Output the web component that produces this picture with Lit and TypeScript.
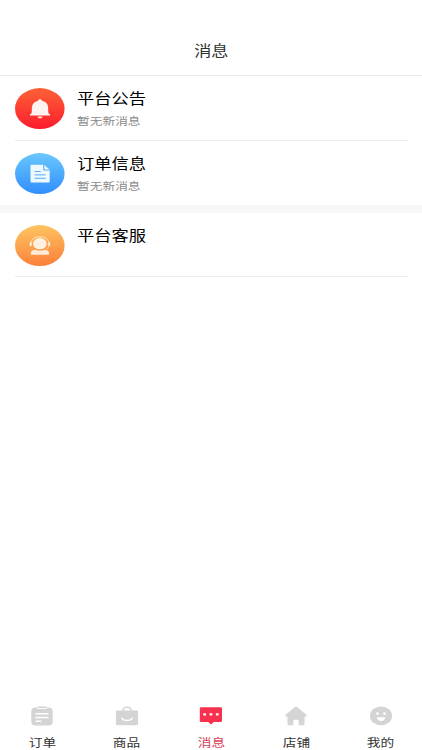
import { LitElement, html, css, svg } from "lit";
import { customElement } from "lit/decorators.js";

const bell = html`<svg width="50" height="42" viewBox="0 0 50 42">
  <defs><linearGradient id="g" x1="0" y1="0" x2="0" y2="1"><stop offset="0" stop-color="#fd6237"/><stop offset="1" stop-color="#fb1c2c"/></linearGradient></defs>
  <ellipse cx="24.8" cy="20.6" rx="24.8" ry="20.5" fill="url(#g)"/>
  <path d="M25 11.3c1.200 0 1.900.7 2 1.600 4 .6 6 3.100 6.100 6.500l.2 5c.1.900.7 1.300 1.700 1.800v1.300H15v-1.300c1.100-.5 1.600-.9 1.700-1.800l.2-5c.2-3.400 2.200-5.900 6.100-6.500.1-.9.800-1.600 2-1.600z" fill="#fff3f1"/>
  <path d="M22.600 28.400h5c-.3 1.300-1.100 1.900-2.500 1.900s-2.200-.6-2.500-1.900z" fill="#ffe4e1"/></svg>`;
const doc = html`<svg width="50" height="42" viewBox="0 0 50 42">
  <defs><linearGradient id="g" x1="0" y1="0" x2="0" y2="1"><stop offset="0" stop-color="#6ac7fd"/><stop offset="1" stop-color="#2f8efd"/></linearGradient></defs>
  <ellipse cx="24.8" cy="20.6" rx="24.8" ry="20.5" fill="url(#g)"/>
  <path d="M16.700 11.700h11.500v4.600c0 .8.500 1.300 1.300 1.300h5.200v10.700q0 1.200-1.300 1.200H16.800q-1.300 0-1.300-1.200V12.900q0-1.200 1.200-1.200z" fill="#eef8ff"/>
  <path d="M29.300 11.900l5.300 4.600h-4.500q-.8 0-.8-.7z" fill="#eef8ff"/>
  <path d="M19.700 18.500h6M19.700 21.900h11M19.700 25.300h11" stroke="#54acf8" stroke-width="1"/></svg>`;
const agent = html`<svg width="50" height="42" viewBox="0 0 50 42">
  <defs><linearGradient id="g" x1=".45" y1="0" x2=".55" y2="1"><stop offset="0" stop-color="#fdc461"/><stop offset="1" stop-color="#fc8039"/></linearGradient></defs>
  <ellipse cx="24.8" cy="20.6" rx="24.8" ry="20.5" fill="url(#g)"/>
  <path d="M15.800 18.300c.5-4.200 4.300-6.500 9.100-6.500s8.600 2.300 9.100 6.500" fill="none" stroke="#fff0dc" stroke-width=".8"/>
  <ellipse cx="24.900" cy="18.700" rx="6.800" ry="5.600" fill="#fff1e2"/>
  <rect x="14.700" y="17.200" width="2" height="4" rx="1" fill="#fff0dc"/>
  <rect x="33.100" y="17.200" width="2" height="4" rx="1" fill="#fff0dc"/>
  <path d="M34 21.200c-.5 1.500-1.500 2.500-3 3" fill="none" stroke="#fff0dc" stroke-width=".5"/>
  <path d="M15.800 29.700v-1.300c0-2.300 2-3.400 4.500-3.600 1.400.7 3 1 4.600 1s3.300-.3 4.700-1c2.500.2 4.500 1.300 4.500 3.600v1.300z" fill="#ffecd8"/></svg>`;

const navIcon = (body: unknown) =>
  html`<svg width="24" height="20" viewBox="0 0 24 20">${body}</svg>`;

const tabs = [
  { label: "订单", icon: svg`<rect x="1.300" y="1.600" width="21.400" height="17.900" rx="4" fill="#d4d4d4"/>
    <path d="M7 1.900h10" stroke="#fff" stroke-width="2"/><path d="M8 1.200h8" stroke="#d4d4d4" stroke-width="1.500" stroke-linecap="round"/>
    <path d="M6 7.700h12M6 11.500h12M6 15.300h4.800" stroke="#fff" stroke-width="1.500" stroke-linecap="round"/>` },
  { label: "商品", icon: svg`<path d="M7.800 5.200C7.800 2.700 9.300 1.300 12 1.300s4.200 1.400 4.200 3.900" fill="none" stroke="#d4d4d4" stroke-width="1.400"/>
    <path d="M2.400 4.600h19.200q1.500 0 1.500 1.400v11.800q0 1.500-1.800 1.500H2.700q-1.800 0-1.800-1.500V6q0-1.400 1.500-1.400z" fill="#d4d4d4"/>
    <path d="M6.900 12.400c2.700 2.800 7.500 2.800 10.200 0" fill="none" stroke="#fff" stroke-width="1.500" stroke-linecap="round"/>` },
  { label: "消息", active: true, icon: svg`<path d="M2.300 1.300h19.200q1.500 0 1.500 1.300v12.200q0 1.300-1.500 1.300h-6.700L12 18.600l-2.800-2.500H2.300Q.8 16.100.8 14.800V2.600q0-1.300 1.500-1.300z" fill="#f7314e"/>
    <path d="M4.300 7.200h2.700v2.200H4.300zM10.600 7.200h2.700v2.200h-2.700zM16.900 7.200h2.700v2.200h-2.700z" fill="#fff"/>` },
  { label: "店铺", icon: svg`<path d="M10.900 1.100q1.100-.8 2.200 0l9.400 7.700c.9.800.3 1.700-.8 1.700h-1.200v7.500q0 1.300-1.500 1.300h-4.300v-4.300q0-1.200-1.400-1.200h-2.600q-1.400 0-1.400 1.200v4.300H5q-1.500 0-1.500-1.300v-7.500H2.300c-1.100 0-1.700-.9-.8-1.700z" fill="#d4d4d4"/>` },
  { label: "我的", icon: svg`<ellipse cx="12" cy="9.900" rx="11.100" ry="9.300" fill="#d4d4d4"/>
    <ellipse cx="8.500" cy="7.600" rx="1.400" ry="1.300" fill="#fff"/><ellipse cx="15.500" cy="7.600" rx="1.400" ry="1.300" fill="#fff"/>
    <path d="M7.800 11.300h8.600c-.4 2.500-2 3.600-4.300 3.600s-3.900-1.100-4.300-3.600z" fill="#fff"/>` },
];

@customElement("message-row")
class MessageRow extends LitElement {
  static properties = { heading: {}, note: {}, icon: { attribute: false } };
  declare heading: string;
  declare note: string;
  declare icon: unknown;
  static styles = css`
    :host { display: flex; height: 64px; margin: 0 14px 0 15px; border-bottom: 1px solid #ececec; box-sizing: border-box; }
    .icon { width: 50px; height: 42px; margin: 12px 12px 0 0; }
    svg { display: block; }
    .texts { display: flex; flex-direction: column; padding-top: 12px; }
    .heading, .note { transform: scaleX(1.2); transform-origin: left; white-space: nowrap; }
    .heading { font-size: 14.400px; line-height: 20px; color: #000; }
    .note { font-size: 10.600px; line-height: 16px; margin-top: 5px; color: #8c8c8c; }
  `;
  render() {
    return html`<div class="icon">${this.icon}</div>
      <div class="texts"><div class="heading">${this.heading}</div>
      ${this.note ? html`<div class="note">${this.note}</div>` : ""}</div>`;
  }
}

@customElement("app-root")
class AppRoot extends LitElement {
  static styles = css`
    :host { display: flex; flex-direction: column; height: 750px; background: #fff; overflow: hidden;
      font-family: "Noto Sans CJK SC", sans-serif; }
    header { height: 76px; box-sizing: border-box; padding-top: 37px; border-bottom: 1px solid #ebebeb; text-align: center; }
    .title { display: inline-block; font-size: 14.300px; line-height: 24px; color: #333; transform: scaleX(1.2); }
    main { flex: 1; }
    .first { height: 65px; }
    .last { border-bottom: 0; }
    .gap { height: 8px; background: #f7f7f7; }
    nav { display: flex; height: 44px; margin-right: -1px; }
    .tab { flex: 1; display: flex; flex-direction: column; align-items: center; color: #333; }
    .tab svg { display: block; height: 20px; flex: none; }
    .label { font-size: 11.400px; line-height: 18px; margin-top: 7px; transform: scaleX(1.2); }
    .active { color: #d5425c; }
  `;
  render() {
    return html`<header><span class="title">消息</span></header>
      <main>
        <message-row class="first" .heading=${"平台公告"} .note=${"暂无新消息"} .icon=${bell}></message-row>
        <message-row class="last" .heading=${"订单信息"} .note=${"暂无新消息"} .icon=${doc}></message-row>
        <div class="gap"></div>
        <message-row .heading=${"平台客服"} .icon=${agent}></message-row>
      </main>
      <nav>${tabs.map((t) => html`<div class="tab ${t.active ? "active" : ""}">${navIcon(t.icon)}<span class="label">${t.label}</span></div>`)}</nav>`;
  }
}
